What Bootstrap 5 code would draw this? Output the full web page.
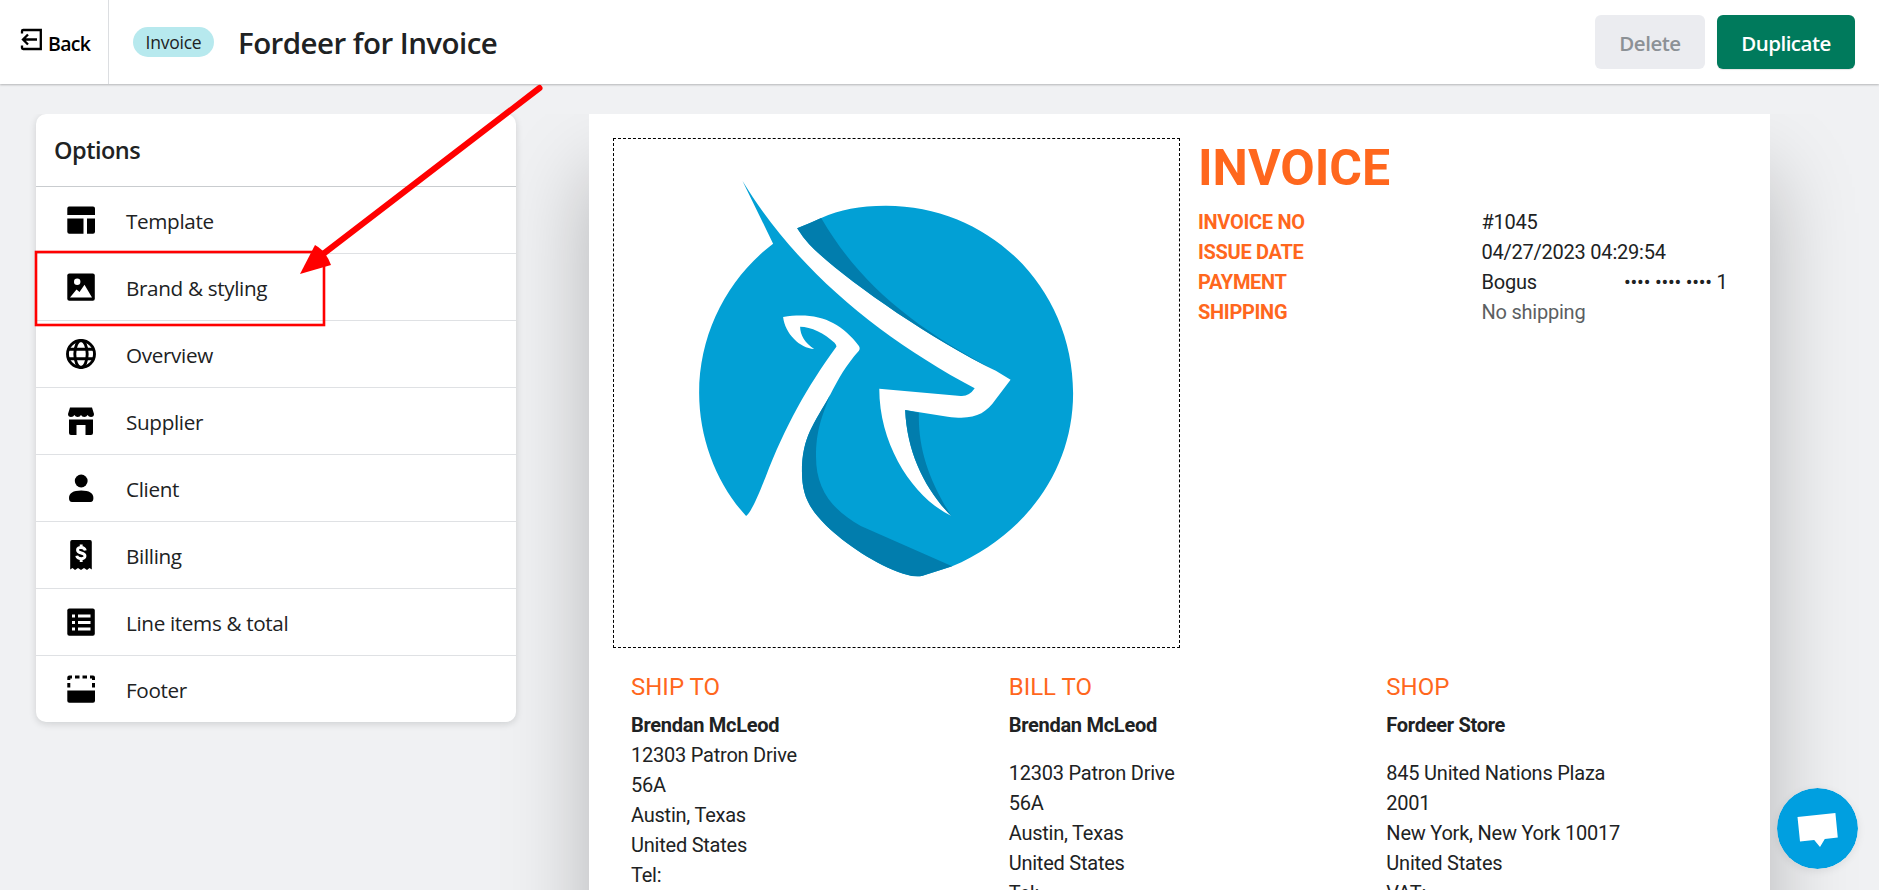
<!DOCTYPE html>
<html lang="en">
<head>
<meta charset="utf-8">
<meta name="viewport" content="width=device-width, initial-scale=1">
<title>Fordeer for Invoice</title>
<link href="https://cdn.jsdelivr.net/npm/bootstrap@5.3.0/dist/css/bootstrap.min.css" rel="stylesheet">
<script src="https://cdn.jsdelivr.net/npm/bootstrap@5.3.0/dist/js/bootstrap.bundle.min.js" defer></script>
<style>
body{font-family:"Open Sans",sans-serif;background:#f0f1f3;color:#202223;height:890px;overflow:hidden}
.topbar{height:84px;box-shadow:0 1px 2px rgba(0,0,0,.25);position:relative;z-index:2}
.back-link{width:109px;border-right:1px solid #dcdee1;padding-left:20px;color:#000;font-weight:600;font-size:19.5px;letter-spacing:-.7px}
.back-link svg{margin:-6px 5px 0 0}
.back-link span{padding-top:3px}
.pill{background:#b7e9ee;border-radius:15px;height:30px;width:81px;font-size:17.5px;margin-left:24px;letter-spacing:-.25px;line-height:31px;text-align:center}
.app-title{font-size:29.5px;font-weight:600;margin-left:24px;letter-spacing:-.55px;padding-top:3px}
.act{height:54px;border-radius:6px;border:0;font-weight:600;font-size:20.5px;letter-spacing:-.5px;padding:3px 0 0}
.act-del{width:110px;background:#ebecf0;color:#8c9196}
.act-dup{width:138px;background:#007a5c;color:#fff;box-shadow:0 1px 1px rgba(0,0,0,.1)}
.act-gap{gap:12px}
.work{height:776px;margin-top:30px;padding-left:36px;overflow:hidden}
.options{width:480px;height:608px;border-radius:10px;box-shadow:0 2px 7px rgba(23,24,24,.15);border:0;position:relative;z-index:1;overflow:hidden}
.opt-head{height:73px;flex-shrink:0;border-bottom:1px solid #c9cccf;font-size:23.5px;font-weight:600;padding:2px 0 0 18px;letter-spacing:-.5px}
.opt{height:67px;flex-shrink:0;border-bottom:1px solid #dfe1e4;padding-left:27px;font-size:20.7px;letter-spacing:-.35px}
.opt:last-child{border-bottom:0}
.opt svg{width:36px;height:36px;margin-right:27px;margin-top:-1px}
.opt span{padding-top:3px}
.sheet{width:1181px;height:1100px;margin-left:73px;background:#fff;box-shadow:0 60px 78px rgba(0,0,0,.25);padding:24px 24px 0;font-family:Roboto,sans-serif;font-size:20px;line-height:30px;letter-spacing:-.23px;color:#202223}
.logo-box{width:567px;height:510px;border:1px dashed #000}
.meta{width:566px;padding-left:18px}
.inv{font-size:50px;line-height:60px;font-weight:700;color:#ff671d;margin-bottom:9px;letter-spacing:0}
.lbl{width:283.500px;color:#ff671d;font-weight:700;letter-spacing:-.3px}
.pay{width:246px}
.muted{color:#5c5f62}
.who{width:378.300px;padding-left:18px}
.who h2{font-size:24px;line-height:30px;color:#ff671d;font-weight:400;margin:0 0 8px;letter-spacing:0}
.who b{letter-spacing:-.28px}
.gap-top{margin-top:18px}
.marks{position:absolute;left:0;top:0;z-index:3;pointer-events:none}
.chat{position:absolute;left:1777px;top:788px;z-index:4;border-radius:50%;box-shadow:0 2px 8px rgba(0,0,0,.08)}
</style>
</head>
<body>
<header class="topbar bg-white d-flex align-items-center">
  <a href="#" class="back-link d-flex align-items-center h-100 text-decoration-none">
    <svg width="23" height="23" viewBox="0 0 23 23" fill="none" stroke="#000" stroke-width="2.300"><path d="M2 5.500V3.200Q2 2 3.200 2H20.800V21H3.200Q2 21 2 20V17.500"/><path d="M17 11.500H3.500M8 6.500L3 11.500L8 16.500"/></svg>
    <span>Back</span>
  </a>
  <div class="pill">Invoice</div>
  <div class="app-title">Fordeer for Invoice</div>
  <div class="ms-auto d-flex me-4 act-gap">
    <button class="btn act act-del">Delete</button>
    <button class="btn act act-dup">Duplicate</button>
  </div>
</header>
<main class="work d-flex">
  <aside class="options card flex-shrink-0">
    <div class="opt-head d-flex align-items-center">Options</div>
    <div class="opt d-flex align-items-center"><svg viewBox="0 0 36 36"><path d="M6 4.500H30Q32 4.500 32 6.500V13H4.300V6.500Q4.300 4.500 6 4.500ZM4.300 16.500H20.500V31.800H6.300Q4.300 31.800 4.300 29.800ZM24 16.500H32V29.800Q32 31.800 30 31.800H24Z"/></svg><span>Template</span></div>
    <div class="opt d-flex align-items-center"><svg viewBox="0 0 36 36"><rect x="4.300" y="4.500" width="27.500" height="27.300" rx="2"/><circle cx="14.200" cy="12.800" r="3.200" fill="#fff"/><path fill="#fff" d="M7 28.500L13.500 20.500L16.500 23L21.500 15.800L29 28.500Z"/></svg><span>Brand &amp; styling</span></div>
    <div class="opt d-flex align-items-center"><svg viewBox="0 0 36 36" fill="none" stroke="#000" stroke-width="2.900"><circle cx="18" cy="18" r="13.500"/><ellipse cx="18" cy="18" rx="6.200" ry="13.500"/><path d="M5.500 13.300H30.500M5.500 22.700H30.500"/></svg><span>Overview</span></div>
    <div class="opt d-flex align-items-center"><svg viewBox="0 0 36 36"><path d="M7 4.500H29L31 11Q31 14 28 14Q25.500 14 24.600 12Q23.500 14 21.300 14Q19 14 18 12Q17 14 14.700 14Q12.500 14 11.400 12Q10.500 14 8 14Q5 14 5 11ZM6 16.500H30V30Q30 32 28 32H22.500V22H13.500V32H8Q6 32 6 30Z"/></svg><span>Supplier</span></div>
    <div class="opt d-flex align-items-center"><svg viewBox="0 0 36 36"><circle cx="18.200" cy="11" r="6.400"/><path d="M6 28Q6 20.500 18.200 20.500T30.400 28Q30.400 32 27.500 32H9Q6 32 6 28Z"/></svg><span>Client</span></div>
    <div class="opt d-flex align-items-center"><svg viewBox="0 0 36 36"><path d="M9 3H27Q28.800 3 28.800 5V32.500L26.500 31L24 33L21 31L18 33L15 31L12 33L9.500 31L7.200 32.500V5Q7.200 3 9 3Z"/><path fill="none" stroke="#fff" stroke-width="2.900" d="M22.300 13.500C21.500 9.500 14.500 9.500 14.500 13C14.500 17 22 15 22 19C22 22.800 14.500 22.500 13.700 18.800M18.200 7.500V11M18.200 21V25"/></svg><span>Billing</span></div>
    <div class="opt d-flex align-items-center"><svg viewBox="0 0 36 36"><rect x="4.300" y="4.500" width="27.500" height="27.300" rx="2"/><path stroke="#fff" stroke-width="2.800" d="M9 12H12M9 18.500H12M9 25H12M15 12H27.500M15 18.500H27.500M15 25H27.500"/></svg><span>Line items &amp; total</span></div>
    <div class="opt d-flex align-items-center"><svg viewBox="0 0 36 36"><path d="M4.300 19.500H32V29.800Q32 31.800 30 31.800H6.300Q4.300 31.800 4.300 29.800Z"/><path d="M4.300 9V6.500Q4.300 4.500 6.300 4.500H9V7.500H7.300V9ZM12 4.500H16.500V7.500H12ZM19.500 4.500H24V7.500H19.500ZM27 4.500H30Q32 4.500 32 6.500V9H29V7.500H27ZM4.300 12H7.300V16.500H4.300ZM29 12H32V16.500H29Z"/></svg><span>Footer</span></div>
  </aside>
  <section class="sheet flex-shrink-0">
    <div class="d-flex">
      <div class="logo-box flex-shrink-0">
        <svg width="565" height="508" viewBox="0 0 565 508"><g transform="translate(-14 -9) scale(.36990 .33333)">
          <path fill="#02a0d5" d="M385 152L468 341C345 445 268 610 268 788C268 930 318 1065 395 1158C410 1145 430 1090 448 1040C500 890 560 770 639 650Q640 645 634 638C607 610 570 590 541 590C541 615 555 640 579 657C540 655 500 610 495 561C590 545 650 575 700 648Q704 655 700 662C665 705 645 745 622 795C580 880 546 920 546 1025C546 1090 562 1132 610 1185C660 1240 750 1307 820 1331Q850 1342 870 1338Q905 1326 952 1309C1150 1215 1279 1020 1279 790C1279 480 1060 228 773 227C700 228 650 238 598 264Q565 281 533 295Q548 322 565 342C640 430 880 620 1070 722L1110 749L1070 808C1040 855 1010 870 940 860L825 840C830 970 880 1080 949 1157C850 1105 755 950 755 776L975 798Q998 800 1013 775C760 625 530 420 385 152Z"/>
          <path fill="#017dad" d="M533 295Q565 281 598 264C700 460 850 595 1070 722C880 620 640 430 565 342Q548 322 533 295ZM825 840L862 848C860 960 890 1050 949 1157C880 1080 830 970 825 840ZM622 795C600 860 584 900 584 980C584 1070 620 1135 705 1188L952 1309Q905 1326 870 1338Q850 1342 820 1331C750 1307 660 1240 610 1185C562 1132 546 1090 546 1025C546 920 580 880 622 795Z"/>
        </g></svg>
      </div>
      <div class="meta">
        <div class="inv">INVOICE</div>
        <div class="d-flex"><div class="lbl">INVOICE NO</div><div>#1045</div></div>
        <div class="d-flex"><div class="lbl">ISSUE DATE</div><div>04/27/2023 04:29:54</div></div>
        <div class="d-flex"><div class="lbl">PAYMENT</div><div class="pay d-flex justify-content-between"><span>Bogus</span><span>•••• •••• •••• 1</span></div></div>
        <div class="d-flex"><div class="lbl">SHIPPING</div><div class="muted">No shipping</div></div>
      </div>
    </div>
    <div class="d-flex pt-4">
      <div class="who"><h2>SHIP TO</h2><b>Brendan McLeod</b><div>12303 Patron Drive<br>56A<br>Austin, Texas<br>United States<br>Tel:</div></div>
      <div class="who"><h2>BILL TO</h2><b>Brendan McLeod</b><div class="gap-top">12303 Patron Drive<br>56A<br>Austin, Texas<br>United States<br>Tel:</div></div>
      <div class="who"><h2>SHOP</h2><b>Fordeer Store</b><div class="gap-top">845 United Nations Plaza<br>2001<br>New York, New York 10017<br>United States<br>VAT:</div></div>
    </div>
  </section>
</main>
<svg class="marks" width="620" height="340" viewBox="0 0 620 340"><rect x="36" y="252" width="288" height="73" fill="none" stroke="#f00" stroke-width="2.600"/><path d="M539.500 88L318 258" stroke="#f00" stroke-width="6" stroke-linecap="round"/><path fill="#f00" d="M300 274L315 245Q326 251 331 265Z"/></svg>
<svg class="chat" width="81" height="81" viewBox="0 0 81 81"><circle cx="40.500" cy="40.500" r="40.500" fill="#009fe0"/><path fill="#fff" d="M20.500 29L58.400 25L60.800 49.500L47.800 51L43 59L37.200 52L23 53.500Z"/></svg>
</body>
</html>
